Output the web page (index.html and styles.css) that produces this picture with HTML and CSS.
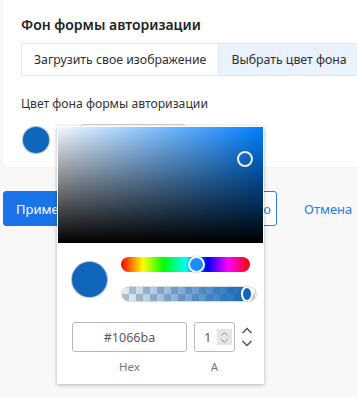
FILE: index.html
```html
<!DOCTYPE html>
<html lang="ru">
<head>
<meta charset="utf-8">
<title>Фон формы авторизации</title>
<link rel="stylesheet" href="styles.css">
</head>
<body>
<div class="page">
  <section class="card">
    <h2 class="title">Фон формы авторизации</h2>
    <div class="tabs">
      <button class="tab">Загрузить свое изображение</button>
      <button class="tab tab-active">Выбрать цвет фона</button>
    </div>
    <div class="label">Цвет фона формы авторизации</div>
    <div class="color-row">
      <span class="swatch"></span>
      <input class="color-input" type="text" value="#1066ba">
      <div class="picker">
        <div class="sat-area">
          <span class="sat-handle"></span>
        </div>
        <div class="picker-body">
          <span class="preview"></span>
          <div class="sliders">
            <div class="hue-slider"><span class="hue-handle"></span></div>
            <div class="alpha-slider"><div class="alpha-track"></div><span class="alpha-handle"></span></div>
          </div>
        </div>
        <div class="fields">
          <div class="field field-hex">
            <div class="hex-input">#1066ba</div>
            <div class="field-label">Hex</div>
          </div>
          <div class="field field-a">
            <div class="a-input"><span class="a-value">1</span>
              <span class="spin">
                <svg width="9" height="13" viewBox="0 0 9 13"><path d="M1.5 4.5 L4.5 1.5 L7.5 4.5 M1.5 8.5 L4.5 11.5 L7.5 8.5" fill="none" stroke="#8a8a8a" stroke-width="1"/></svg>
              </span>
            </div>
            <div class="field-label">A</div>
          </div>
          <div class="toggle">
            <svg width="12" height="22" viewBox="0 0 12 22"><path d="M1.5 7 L6 2.5 L10.5 7 M1.5 15 L6 19.5 L10.5 15" fill="none" stroke="#4a5260" stroke-width="1.4"/></svg>
          </div>
        </div>
      </div>
    </div>
  </section>
  <div class="actions">
    <button class="btn btn-primary">Применить</button>
    <button class="btn btn-outline">Сбросить по умолчанию</button>
    <button class="btn btn-link">Отмена</button>
  </div>
</div>
</body>
</html>
```

FILE: styles.css
```css
html, body {
  margin: 0;
  padding: 0;
  overflow: hidden;
  background: #f8f8f8;
  font-family: "Noto Sans", "Open Sans", sans-serif;
  color: #2b2b2b;
}

.page {
  width: 357px;
  height: 397px;
  overflow: hidden;
}

.card {
  margin-left: 3px;
  width: 420px;
  background: #fff;
  border-radius: 0 0 6px 6px;
  padding: 15px 0 11px 18px;
  box-sizing: border-box;
  box-shadow: 0 0 2px rgba(0, 0, 0, 0.06);
}

.title {
  margin: 0;
  font-size: 14px;
  line-height: 20px;
  font-weight: 600;
  color: #232323;
}

.tabs {
  margin-top: 8px;
  display: flex;
  border: 1px solid #e6e9ec;
  height: 33px;
  box-sizing: border-box;
}

.tab {
  border: 0;
  background: #fff;
  font-family: inherit;
  font-size: 12.3px;
  color: #2e2e2e;
  padding: 0 12px;
  cursor: pointer;
}

.tab-active {
  background: #e9f2fd;
  border-left: 1px solid #e6e9ec;
  flex: 1;
  text-align: left;
}

.label {
  margin-top: 19px;
  font-size: 12.2px;
  line-height: 18px;
  color: #333;
}

.color-row {
  position: relative;
  margin-top: 11px;
  height: 32px;
  display: flex;
  align-items: center;
  gap: 31px;
}

.swatch {
  margin-left: 2px;
  width: 26px;
  height: 26px;
  border-radius: 50%;
  background: #1066ba;
  box-shadow: 0 0 0 1px rgba(120, 150, 190, 0.6);
}

.color-input {
  width: 106px;
  height: 32px;
  box-sizing: border-box;
  border: 1px solid #d0d0d0;
  border-radius: 4px;
  font-family: inherit;
  font-size: 13px;
  padding: 0 8px;
}

.picker {
  position: absolute;
  left: 36px;
  top: 2px;
  width: 207px;
  height: 258px;
  background: #fff;
  box-shadow: 0 1px 4px rgba(0, 0, 0, 0.28);
  box-sizing: border-box;
  padding: 1px 1px 0;
  z-index: 5;
}

.sat-area {
  position: relative;
  height: 116px;
  background:
    linear-gradient(to top, #000, rgba(0, 0, 0, 0)),
    linear-gradient(to right, #f4f9ff, hsl(210, 100%, 50%));
}

.sat-handle {
  position: absolute;
  left: 179px;
  top: 24px;
  width: 16px;
  height: 16px;
  box-sizing: border-box;
  border: 2px solid #f0f0f0;
  border-radius: 50%;
  box-shadow: 0 0 1px rgba(0, 0, 0, 0.4);
}

.picker-body {
  display: flex;
  align-items: center;
  padding: 14px 0 0 14px;
  gap: 14px;
}

.preview {
  width: 35px;
  height: 35px;
  border-radius: 50%;
  background: #1066ba;
  box-shadow: 0 0 0 1px rgba(140, 160, 190, 0.7);
  flex-shrink: 0;
}

.sliders {
  display: flex;
  flex-direction: column;
  gap: 14px;
}

.hue-slider {
  position: relative;
  width: 129px;
  height: 15px;
  border-radius: 8px;
  background: linear-gradient(to right, #f00 0%, #ff0 17%, #0f0 33%, #0ff 50%, #00f 67%, #f0f 83%, #f00 100%);
}

.hue-handle {
  position: absolute;
  left: 67px;
  top: -1px;
  width: 17px;
  height: 17px;
  box-sizing: border-box;
  border-radius: 50%;
  border: 2px solid #fff;
  background: hsl(210, 100%, 55%);
  box-shadow: 0 0 1px rgba(0, 0, 0, 0.5);
}

.alpha-slider {
  position: relative;
  width: 136px;
  height: 16px;
  box-sizing: border-box;
  border: 1px solid #dcdcdc;
  border-radius: 8px;
  overflow: hidden;
  background-color: #fff;
  background-image: conic-gradient(#bfc4ca 25%, #f2f4f6 0 50%, #bfc4ca 0 75%, #f2f4f6 0);
  background-size: 14px 14px;
}

.alpha-track {
  position: absolute;
  left: 0;
  top: 0;
  bottom: 0;
  width: 128px;
  background: linear-gradient(to right, rgba(16, 102, 186, 0.05), #1066ba);
}

.alpha-handle {
  position: absolute;
  left: 119px;
  top: -1px;
  width: 8px;
  height: 12px;
  border: 2px solid #fff;
  border-radius: 50%;
  background: #1066ba;
}

.fields {
  display: flex;
  align-items: flex-start;
  padding: 20px 0 0 14px;
  gap: 7px;
}

.field {
  display: flex;
  flex-direction: column;
  align-items: center;
}

.hex-input {
  width: 115px;
  height: 30px;
  box-sizing: border-box;
  border: 1px solid #b8b8b8;
  border-radius: 3px;
  display: flex;
  align-items: center;
  justify-content: center;
  font-size: 12.5px;
  color: #5a5a5a;
}

.a-input {
  width: 41px;
  height: 30px;
  box-sizing: border-box;
  border: 1px solid #b8b8b8;
  border-radius: 3px;
  display: flex;
  align-items: center;
  justify-content: space-between;
  padding: 0 2px 0 9px;
  font-size: 13px;
  color: #6b5a48;
}

.spin {
  width: 15px;
  height: 16px;
  background: #e6e6e6;
  display: flex;
  align-items: center;
  justify-content: center;
}

.field-label {
  margin-top: 8px;
  font-size: 11.5px;
  line-height: 14px;
  color: #777;
}

.toggle {
  padding-top: 4px;
  margin-left: -1px;
  display: flex;
}

.actions {
  margin-top: 24px;
  margin-left: 3px;
  display: flex;
  align-items: center;
  gap: 8px;
}

.btn {
  height: 35px;
  font-family: inherit;
  font-size: 13px;
  border-radius: 3px;
  padding: 0 12px;
  cursor: pointer;
  white-space: nowrap;
  overflow: hidden;
}

.btn-primary {
  background: #1a73e8;
  color: #fff;
  border: 1px solid #1a73e8;
  width: 92px;
}

.btn-outline {
  background: #fff;
  color: #1a73e8;
  border: 1px solid #2a7ee6;
  width: 174px;
  text-align: right;
}

.btn-link {
  background: none;
  border: 0;
  color: #2b7de6;
  font-size: 13px;
  margin-left: 19px;
  padding: 0;
}
```
